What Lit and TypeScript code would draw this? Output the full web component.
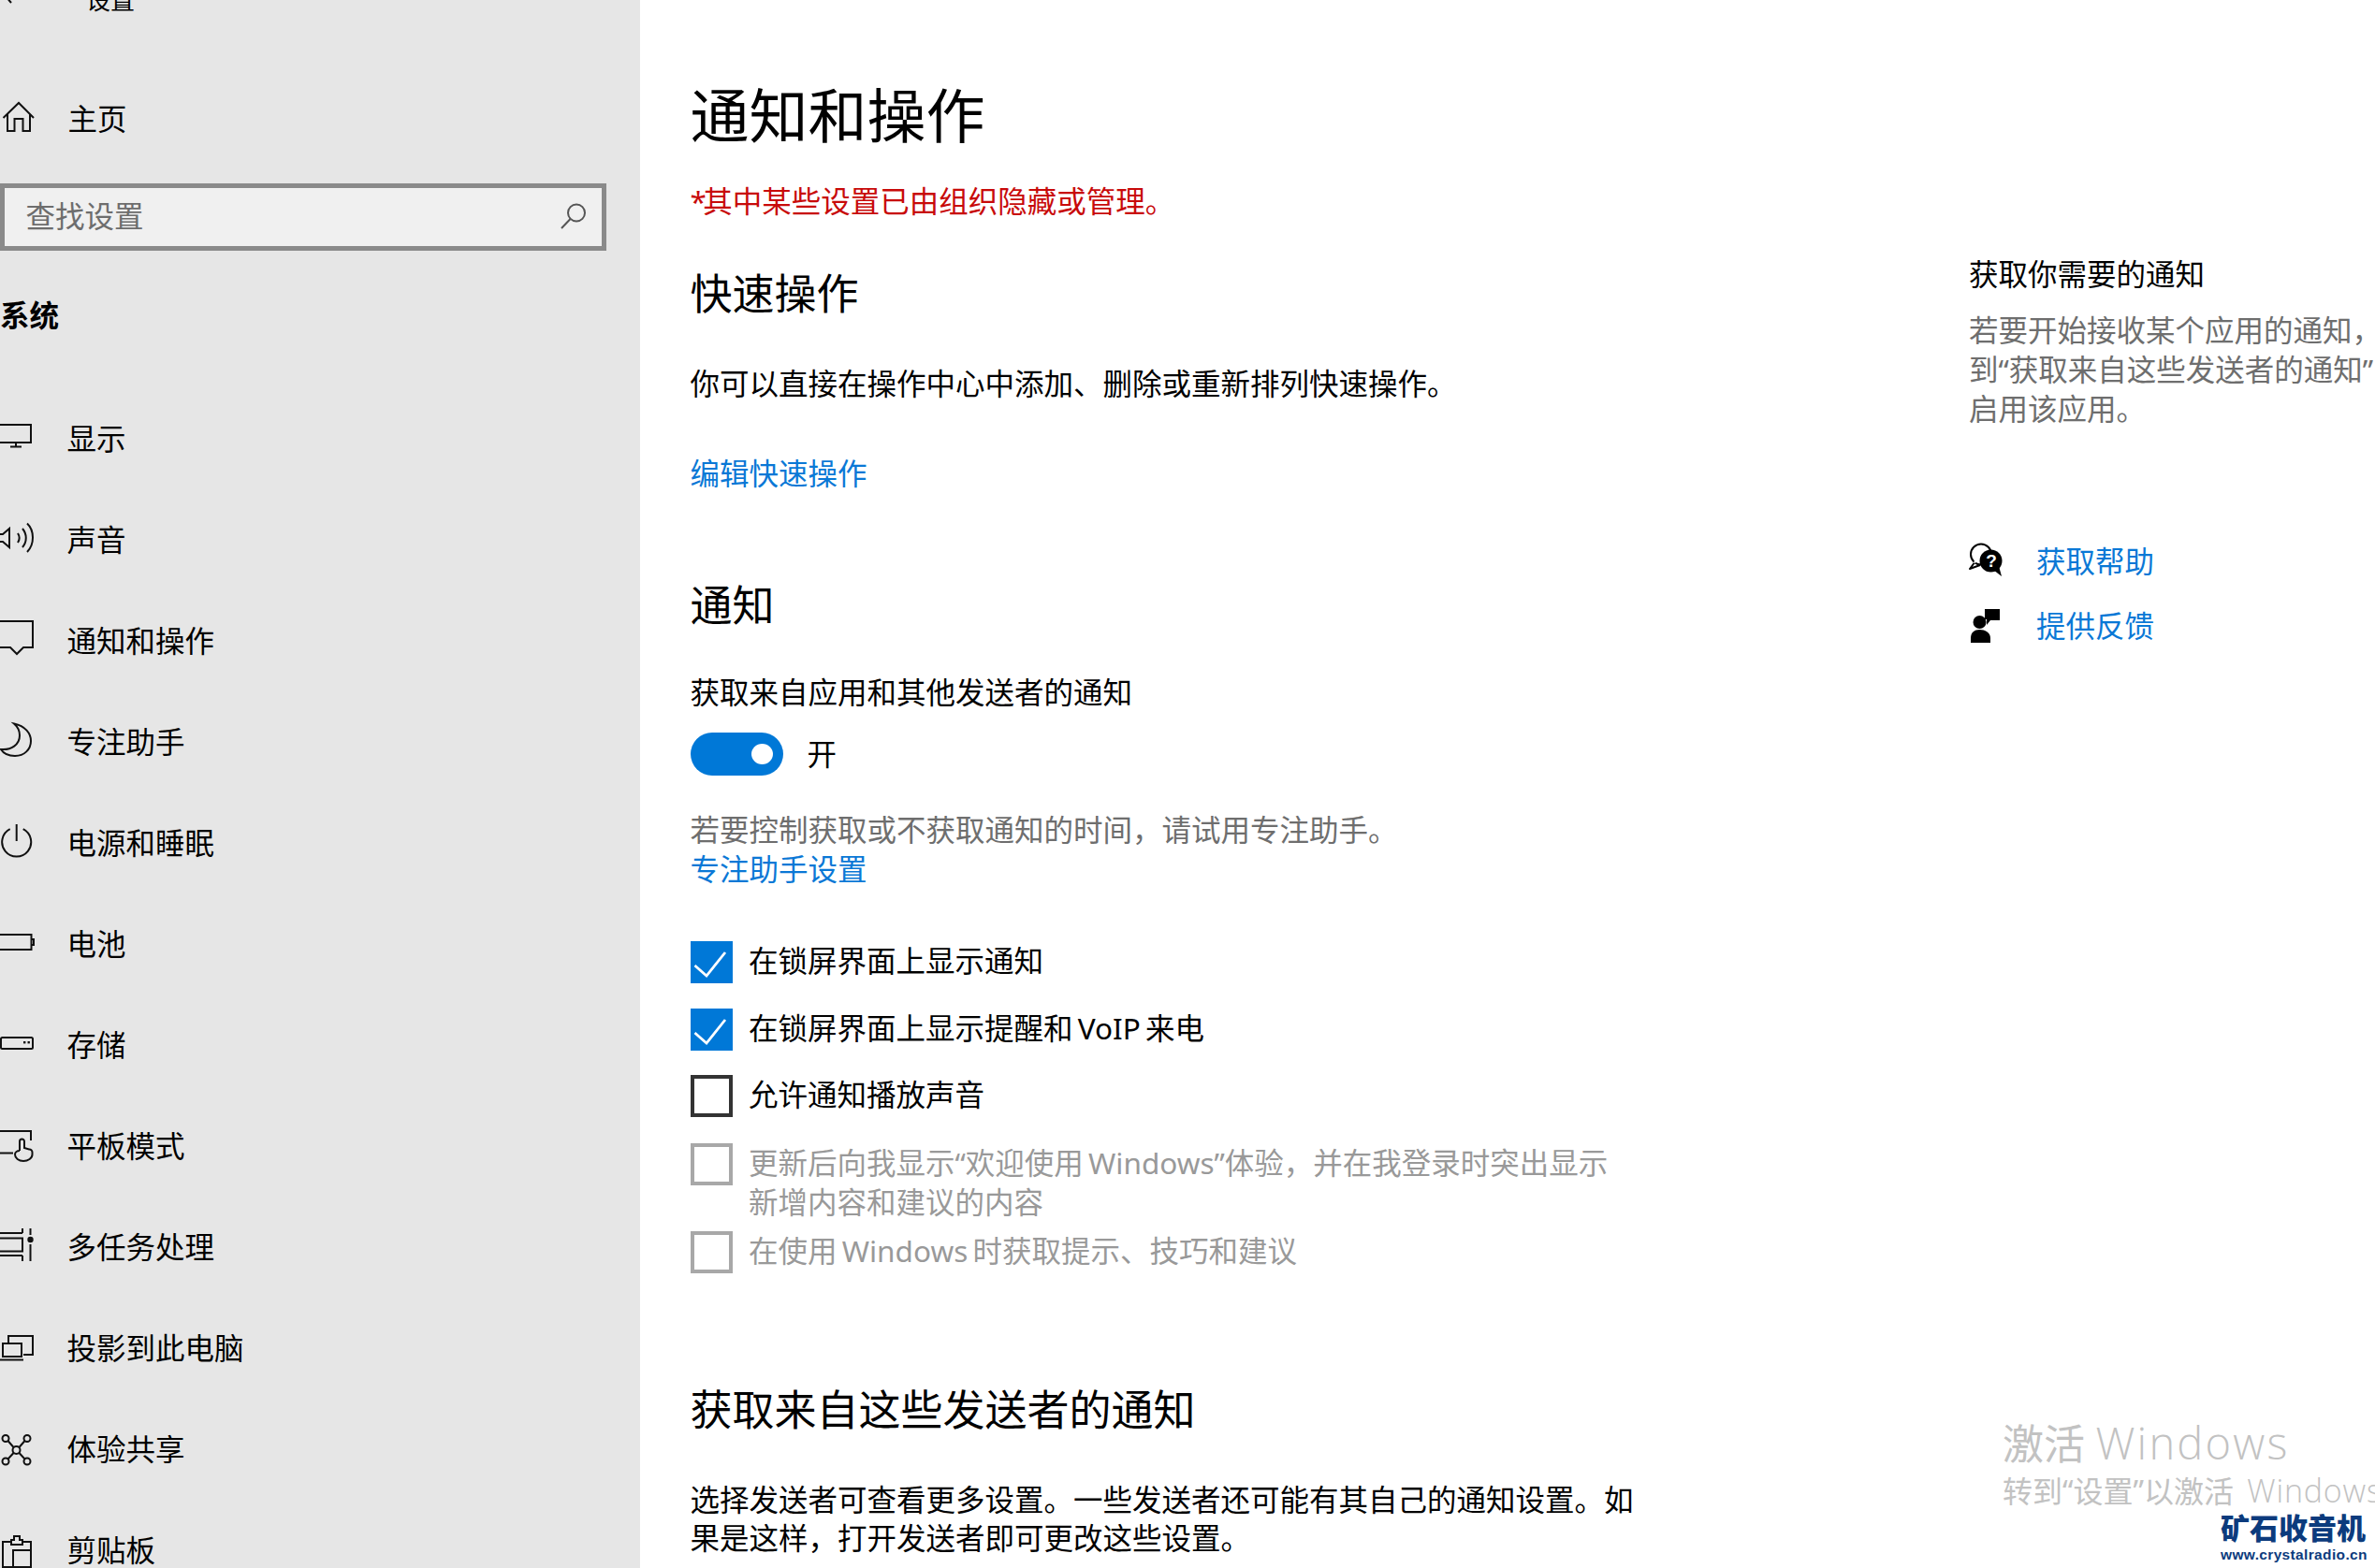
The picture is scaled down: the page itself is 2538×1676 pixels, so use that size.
import { LitElement, html, css, svg } from "lit";
import { customElement } from "lit/decorators.js";

const navItems = [
  { label: "显示", icon: svg`<path d="M-2 3H33V22H-2Z"/><path d="M17 22V26M11 26.5H23"/>` },
  { label: "声音", icon: svg`<path d="M-2 12H3L10 6V26L3 20H-2Z"/><path d="M19 11C21 14 21 18 19 21M24 6C29 12 29 20 24 26M29 0.5C37 8 37 23 29 31"/>` },
  { label: "通知和操作", icon: svg`<path d="M-2 -3H35V25H25L18 32L11 25H-2"/>` },
  { label: "专注助手", icon: svg`<path d="M15 -1.5C27 1 33 9 33 17C33 26 26 33 16 33C9 33 3.5 30 1 26C12 27 21 21 21 11C21 6 19 2 15 -1.5Z"/>` },
  { label: "电源和睡眠", icon: svg`<path d="M10.7 3.2A15.5 15.5 0 1 0 24.7 3.2"/><path d="M17.7 -2V16"/>` },
  { label: "电池", icon: svg`<path d="M-2 8H33.5V24H-2Z"/><path d="M34 13H36V19H34"/>` },
  { label: "存储", icon: svg`<rect x="1" y="10" width="34" height="12" rx="1.5"/><rect class="solid" x="25" y="14" width="2.4" height="2.4"/><rect class="solid" x="29.5" y="14" width="2.4" height="2.4"/>` },
  { label: "平板模式", icon: svg`<path d="M-2 2H33V12"/><path d="M-2 25.5H14"/><path d="M21 23V13A2.5 2.5 0 0 1 26 13V20L31 21.5A3 3 0 0 1 34.5 24.5V27C34.5 31 30 34 25 34C20 34 16 31 16 27C16 25 18 23 21 23"/>` },
  { label: "多任务处理", icon: svg`<path d="M-2 3H24M24 -2V3"/><path d="M-2 8.5H24V22.5H-2"/><path d="M-2 27H24M24 27V33"/><path d="M32.5 -2V5M32.5 15V33"/><circle class="solid" cx="32.5" cy="10" r="3.2"/>` },
  { label: "投影到此电脑", icon: svg`<path d="M9 13V5H35V25H25"/><path d="M3 13H23V27H3Z"/><path d="M-1 30.5H25"/>` },
  { label: "体验共享", icon: svg`<circle cx="6" cy="6.5" r="3.5"/><circle cx="29" cy="6.5" r="3.5"/><circle cx="6" cy="31" r="3.5"/><circle cx="29" cy="31" r="3.5"/><circle cx="17.5" cy="19" r="4"/><path d="M8.5 9L14.5 16M26.5 9L20.5 16M8.5 28.5L14.5 22M26.5 28.5L20.5 22"/>` },
  { label: "剪贴板", icon: svg`<path d="M12 9H3V36H33V9H24"/><path d="M12 12V7H15V3H21V7H24V12Z"/><path d="M14 36V18H33"/>` },
];

@customElement("app-root")
export class AppRoot extends LitElement {
  static styles = css`
    :host {
      display: block;
      width: 2538px;
      height: 1676px;
      overflow: hidden;
      position: relative;
      background: #fff;
      color: #000;
      font-family: "Noto Sans", "Noto Sans CJK SC", sans-serif;
      font-size: 31.5px;
      line-height: 42px;
    }
    .page { display: flex; height: 1676px; }
    .side {
      width: 684px; flex: none; height: 1676px; overflow: hidden;
      background: #e6e6e6;
    }
    .back { display: flex; height: 42px; margin-top: -21px; align-items: center; }
    .back svg { width: 14px; height: 14px; margin-left: 4px; flex: none; overflow: visible; }
    .back span { margin-left: 74px; font-size: 26px; }
    .row { display: flex; align-items: center; }
    .row svg { width: 36px; height: 36px; flex: none; overflow: visible; fill: none; stroke: #111; stroke-width: 2; }
    .row svg .solid { fill: #111; stroke: none; }
    .home { height: 42px; margin-top: 85px; gap: 36.5px; }
    .search {
      box-sizing: border-box; width: 648px; height: 72px; margin-top: 48px;
      border: 5px solid #8a8a8a;
      background: #f0f0f0; color: #6d6d6d;
      display: flex; align-items: center; justify-content: space-between;
      padding: 0 15px 3px 22.5px;
    }
    .search svg { width: 30px; height: 30px; fill: none; stroke: #555; stroke-width: 2; flex: none; margin-top: 3px; }
    .group { font-weight: 700; height: 42px; margin-top: 48px; }
    .nav { margin-top: 57px; }
    .nav .row { height: 108px; gap: 35.5px; }
    .main { width: 1420px; flex: none; padding: 81px 0 0 53.5px; box-sizing: border-box; height: 1676px; overflow: hidden; }
    h1 { margin: 0; font-weight: 400; font-size: 63px; line-height: 84px; }
    h2 { margin: 0; font-weight: 400; font-size: 45px; line-height: 60px; }
    p { margin: 0; }
    .warn { margin-top: 29px; color: #c80a0a; }
    .star { letter-spacing: -3.5px; }
    .m47 { margin-top: 47.5px; }
    .m45 { margin-top: 45px; }
    .link { color: #0a78d6; }
    .m54 { margin-top: 54px; }
    .m90 { margin-top: 90px; }
    .m42 { margin-top: 42px; }
    .toggle-row { display: flex; align-items: center; gap: 26px; height: 46px; margin-top: 22px; }
    .toggle {
      width: 99px; height: 46px; border-radius: 23px; background: #0078d7;
      box-sizing: border-box; display: flex; align-items: center; justify-content: flex-end; padding-right: 11px;
    }
    .knob { width: 23px; height: 22px; border-radius: 50%; background: #fff; }
    .gray { color: #6e6e6e; }
    .hint { margin-top: 37px; }
    .checks { margin-top: 56.5px; word-spacing: -3px; }
    .check { display: flex; gap: 17.5px; margin-bottom: 26.5px; min-height: 45px; }
    .check.more { margin-bottom: 27.5px; }
    .check.multi { margin-bottom: 10px; }
    .check.last { margin-bottom: 0; }
    .check.off { color: #999; }
    .box { width: 45px; height: 45px; box-sizing: border-box; flex: none; }
    .box.on { background: #0078d7; }
    .box.on svg { display: block; width: 45px; height: 45px; fill: none; stroke: #fff; stroke-width: 2.8; }
    .box.empty { border: 4.5px solid #333; }
    .box.dis { border: 4.5px solid #a8a8a8; }
    .senders { margin-top: 116px; }
    .para { margin-top: 45px; width: 1020px; line-height: 41.5px; }
    .aside { flex: 1; min-width: 0; padding-top: 272px; white-space: nowrap; overflow: hidden; }
    .aside .desc { margin-top: 18px; line-height: 42px; }
    .help { display: flex; flex-direction: column; gap: 27px; margin-top: 121px; }
    .help .item { display: flex; align-items: center; gap: 36px; height: 42px; }
    .help svg { width: 36px; height: 38px; flex: none; overflow: visible; }
    .activate { position: absolute; left: 2140px; top: 1520px; color: #c2c2c2; white-space: nowrap; }
    .activate .big { font-size: 44px; line-height: 44px; }
    .activate .big .lat { font-family: "Open Sans", sans-serif; font-weight: 300; font-size: 47px; letter-spacing: 2.2px; }
    .activate .small { font-size: 32px; line-height: 42px; margin-top: 7px; }
    .activate .small .lat { font-family: "Open Sans", sans-serif; font-weight: 300; font-size: 34px; letter-spacing: 0.8px; margin-left: 6px; }
    .logo { position: absolute; left: 2373px; top: 1612px; color: #0c3b7d; white-space: nowrap; font-weight: 700; }
    .logo .cn { font-size: 31px; line-height: 40px; font-family: "Noto Sans CJK SC", sans-serif; font-weight: 900; }
    .logo .url { font-size: 15.5px; line-height: 18px; font-family: "Liberation Sans", sans-serif; letter-spacing: 0.35px; margin-top: 1px; }
  `;

  private check(state: string, text: unknown, cls = "") {
    const box =
      state === "on"
        ? html`<div class="box on"><svg viewBox="0 0 45 45"><path d="M4.5 26L17 37L37 12"/></svg></div>`
        : html`<div class="box ${state}"></div>`;
    return html`<div class="check ${cls}">${box}<div>${text}</div></div>`;
  }

  render() {
    return html`
      <div class="page">
        <aside class="side">
          <div class="back">
            <svg viewBox="0 0 14 14"><path d="M8 -4L2 3L8 10" fill="none" stroke="#111" stroke-width="2"/></svg>
            <span>设置</span>
          </div>
          <div class="row home">
            <svg><path d="M3.5 17L20 1L36 17"/><path d="M8 13V31H15.5V18H24.5V31H32V13"/></svg>
            <span>主页</span>
          </div>
          <div class="search">
            <span>查找设置</span>
            <svg viewBox="0 0 30 30"><circle cx="18" cy="10.5" r="9"/><path d="M11.5 17L2 27"/></svg>
          </div>
          <div class="group">系统</div>
          <nav class="nav">
            ${navItems.map((n) => html`<div class="row"><svg>${n.icon}</svg><span>${n.label}</span></div>`)}
          </nav>
        </aside>
        <main class="main">
          <h1>通知和操作</h1>
          <p class="warn"><span class="star">*</span>其中某些设置已由组织隐藏或管理。</p>
          <h2 class="m47">快速操作</h2>
          <p class="m45">你可以直接在操作中心中添加、删除或重新排列快速操作。</p>
          <p class="link m54">编辑快速操作</p>
          <h2 class="m90">通知</h2>
          <p class="m42">获取来自应用和其他发送者的通知</p>
          <div class="toggle-row"><div class="toggle"><div class="knob"></div></div><span>开</span></div>
          <div class="hint">
            <p class="gray">若要控制获取或不获取通知的时间，请试用专注助手。</p>
            <p class="link">专注助手设置</p>
          </div>
          <div class="checks">
            ${this.check("on", "在锁屏界面上显示通知")}
            ${this.check("on", "在锁屏界面上显示提醒和 VoIP 来电")}
            ${this.check("empty", "允许通知播放声音", "more")}
            ${this.check("dis", html`更新后向我显示“欢迎使用 Windows”体验，并在我登录时突出显示<br />新增内容和建议的内容`, "off multi")}
            ${this.check("dis", "在使用 Windows 时获取提示、技巧和建议", "off last")}
          </div>
          <h2 class="senders">获取来自这些发送者的通知</h2>
          <p class="para">选择发送者可查看更多设置。一些发送者还可能有其自己的通知设置。如果是这样，打开发送者即可更改这些设置。</p>
        </main>
        <section class="aside">
          <div>获取你需要的通知</div>
          <p class="gray desc">若要开始接收某个应用的通知，<br />到“获取来自这些发送者的通知”<br />启用该应用。</p>
          <div class="help">
            <div class="item">
              <svg viewBox="0 0 36 38">
                <path d="M7 19L1 27L12 23" fill="#fff" stroke="#000" stroke-width="2" stroke-linejoin="round"/>
                <circle cx="13" cy="11.5" r="11" fill="#fff" stroke="#000" stroke-width="2"/>
                <path d="M6.5 17L5 21L9 20Z" fill="#fff"/>
                <circle cx="23.5" cy="18.5" r="12" fill="#000"/>
                <path d="M26 28L35 35L32 24Z" fill="#000"/>
                <text x="24" y="25" text-anchor="middle" font-size="19" font-weight="700" fill="#fff" font-family="Liberation Sans">?</text>
              </svg>
              <span class="link">获取帮助</span>
            </div>
            <div class="item">
              <svg viewBox="0 0 36 38">
                <circle cx="11.5" cy="15" r="7" fill="#000"/>
                <path d="M2 37V32C2 26 6 23 11.5 23C17 23 23 26 23 32V37Z" fill="#000"/>
                <path d="M17 1H33V13H23L19 18V12H17Z" fill="#000"/>
              </svg>
              <span class="link">提供反馈</span>
            </div>
          </div>
        </section>
      </div>
      <div class="activate">
        <div class="big">激活 <span class="lat">Windows</span></div>
        <div class="small">转到“设置”以激活 <span class="lat">Windows</span></div>
      </div>
      <div class="logo">
        <div class="cn">矿石收音机</div>
        <div class="url">www.crystalradio.cn</div>
      </div>
    `;
  }
}
